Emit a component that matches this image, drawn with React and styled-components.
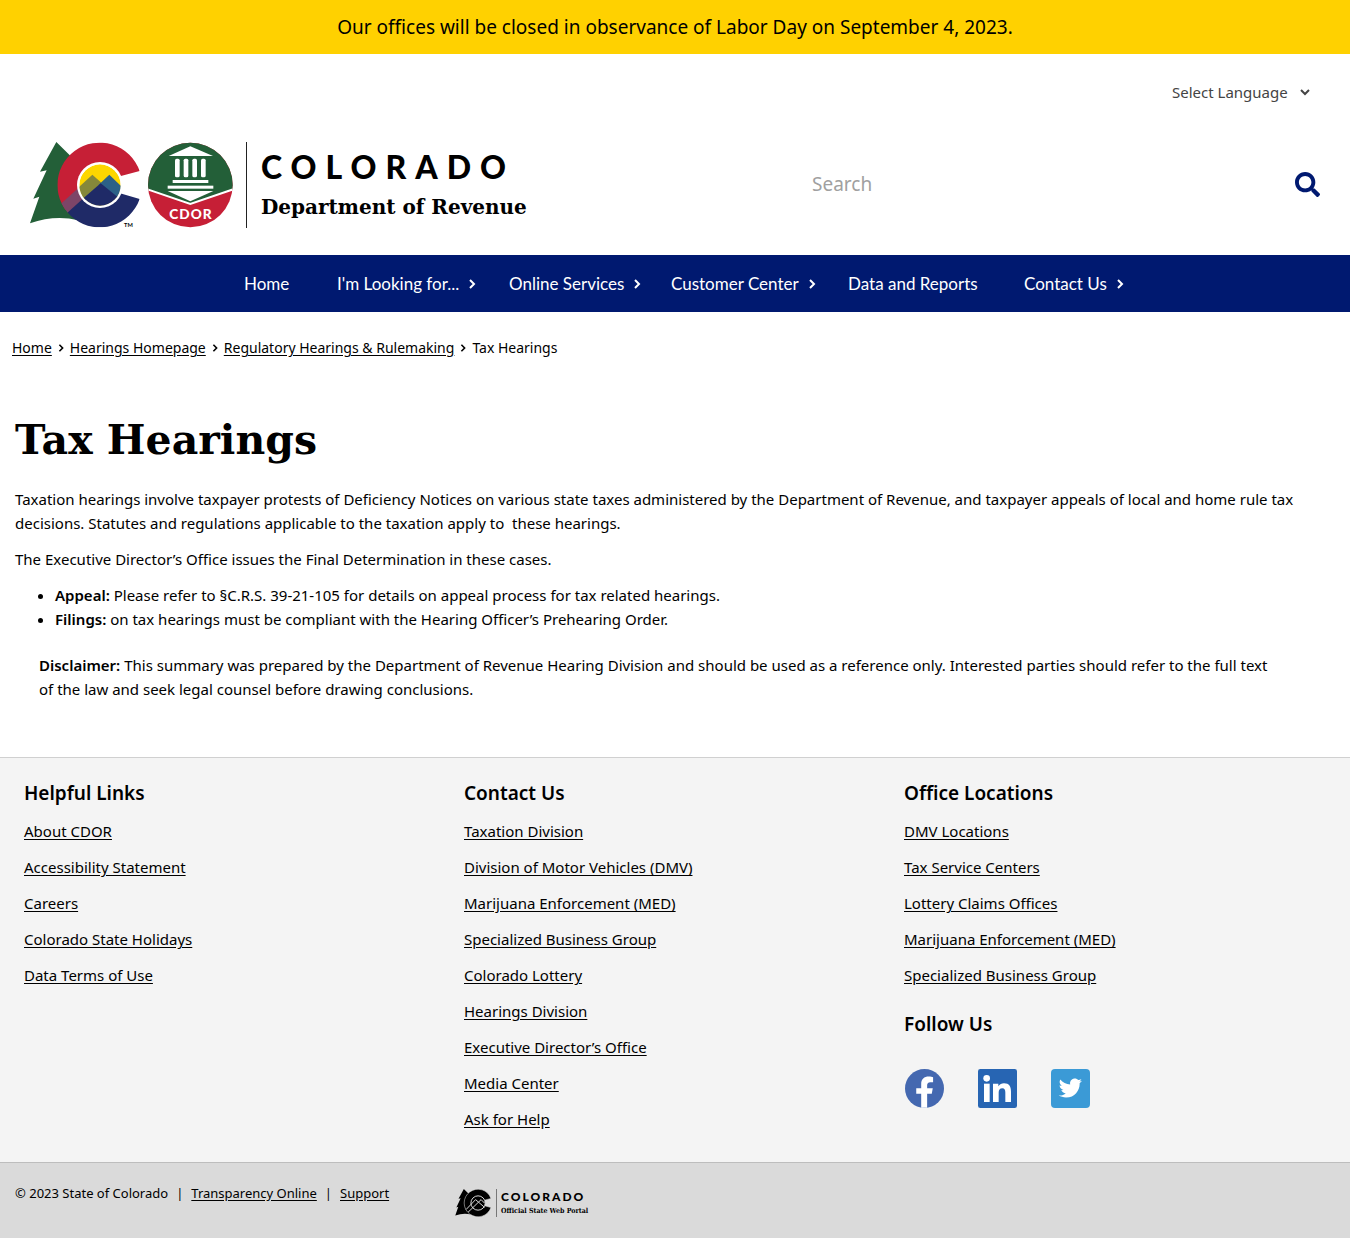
import React from "react";
import styled, { createGlobalStyle } from "styled-components";
import { FaSearch } from "react-icons/fa";

const sans = `"Noto Sans", "Open Sans", sans-serif`;
const navFont = `Lato, "Open Sans", sans-serif`;
const slab = `"DejaVu Serif", serif`;
const slabNarrow = `"DejaVu Serif Condensed", "DejaVu Serif", serif`;

const GlobalStyle = createGlobalStyle`
  *, *::before, *::after { box-sizing: border-box; }
  body {
    margin: 0;
    background: #fff;
    color: #000;
    font-family: ${sans};
    font-size: 15px;
    line-height: 24px;
  }
  a { color: inherit; }
`;

const Banner = styled.div`
  padding: 15px 16px;
  background: #ffd100;
  font-size: 19px;
  text-align: center;
`;

const Header = styled.header`
  padding: 26px 30px 27px;
`;

const LanguageRow = styled.div`
  display: flex;
  justify-content: flex-end;
  align-items: center;
  gap: 12px;
  padding-right: 10px;
  margin-bottom: 38px;
  color: #444;
`;

const LanguageSelect = styled.select`
  appearance: none;
  height: 24px;
  padding: 0;
  border: 0;
  background: transparent;
  color: inherit;
  font-family: ${sans};
  font-size: 15px;
`;

const HeaderMain = styled.div`
  display: flex;
  justify-content: space-between;
  align-items: center;
  gap: 24px;
`;

const Brand = styled.a`
  display: flex;
  align-items: center;
  color: #000;
  text-decoration: none;
`;

const Wordmark = styled.span`
  display: flex;
  flex-direction: column;
  justify-content: center;
  white-space: nowrap;
  height: ${(p) => (p.$small ? 28 : 86)}px;
  gap: ${(p) => (p.$small ? 3 : 8)}px;
  margin-left: ${(p) => (p.$small ? 4 : 12)}px;
  padding-left: ${(p) => (p.$small ? 4 : 14)}px;
  border-left: 1px solid ${(p) => (p.$small ? "#777" : "#222")};
`;

const StateName = styled.span`
  font-family: ${navFont};
  font-weight: 900;
  font-size: ${(p) => (p.$small ? 12 : 32)}px;
  line-height: ${(p) => (p.$small ? 12 : 36)}px;
  letter-spacing: ${(p) => (p.$small ? 2 : 9)}px;
`;

const Agency = styled.span`
  font-family: ${(p) => (p.$small ? slabNarrow : slab)};
  font-weight: 700;
  font-size: ${(p) => (p.$small ? 7 : 20)}px;
  line-height: ${(p) => (p.$small ? 9 : 28)}px;
`;

const SearchForm = styled.form`
  display: flex;
  align-items: center;
  flex: 0 1 508px;
`;

const SearchInput = styled.input`
  flex: 1;
  min-width: 0;
  height: 40px;
  padding: 0 0 2px;
  border: 0;
  outline: 0;
  background: transparent;
  font-family: ${sans};
  font-size: 19px;
  &::placeholder { color: #a0a0a0; opacity: 1; }
`;

const SearchButton = styled.button`
  display: flex;
  padding: 0 0 2px;
  border: 0;
  background: transparent;
  color: #001970;
  cursor: pointer;
`;

const Nav = styled.nav`
  background: #001970;
`;

const NavList = styled.ul`
  display: grid;
  grid-template-columns: 93fr 172fr 162fr 177fr 176fr 130fr;
  max-width: 910px;
  margin: 0 auto;
  padding: 0;
  list-style: none;
`;

const NavLink = styled.a`
  display: flex;
  align-items: center;
  gap: 8px;
  height: 57px;
  padding-left: 24px;
  color: #fff;
  font-family: ${navFont};
  font-size: 17px;
  text-decoration: none;
  white-space: nowrap;
`;

const Crumbs = styled.ol`
  display: flex;
  flex-wrap: wrap;
  margin: 0;
  padding: 24px 12px 0;
  font-size: 14px;
  list-style: none;
`;

const Crumb = styled.li`
  display: flex;
  align-items: center;
  gap: 5px;
  & + & { padding-left: 5px; }
`;

const Link = styled.a`
  text-decoration: underline;
  text-underline-offset: 2px;
`;

const Main = styled.main`
  padding: 52px 15px 56px;
`;

const Title = styled.h1`
  margin: 0 0 19px;
  font-family: ${slab};
  font-size: 41px;
  line-height: 56px;
  font-weight: 700;
`;

const Paragraph = styled.p`
  margin: 0 0 12px;
`;

const Points = styled.ul`
  margin: 0 0 22px;
  padding-left: 40px;
`;

const Disclaimer = styled.p`
  margin: 0 24px;
`;

const Strong = styled.strong`
  font-weight: 600;
`;

const FooterMain = styled.div`
  display: grid;
  grid-template-columns: repeat(3, 1fr);
  padding: 23px 6px 31px 24px;
  border-top: 1px solid #d0d0d0;
  background: #f4f4f4;
`;

const FooterHeading = styled.h2`
  margin: 0;
  font-size: 19px;
  line-height: 24px;
  font-weight: 600;
`;

const FooterLinks = styled.ul`
  display: flex;
  flex-direction: column;
  gap: 12px;
  margin: 0;
  padding: 14px 0 ${(p) => (p.$last ? 0 : 25)}px;
  list-style: none;
`;

const Social = styled.div`
  display: flex;
  gap: 34px;
  padding: 33px 0 0 1px;
`;

const SocialLink = styled.a`
  display: flex;
`;

const FooterBar = styled.div`
  display: grid;
  grid-template-columns: 1fr 2fr;
  align-items: start;
  padding: 18px 15px 21px;
  border-top: 1px solid #bdbdbd;
  background: #dadada;
`;

const Legal = styled.div`
  display: flex;
  gap: 8px;
  font-size: 13px;
`;

const PortalBrand = styled(Brand)`
  padding-top: 8px;
`;

function Chevron({ size = 10, width = 2, down }) {
  return (
    <svg width={size} height={size} viewBox="0 0 10 10" fill="none" stroke="currentColor" strokeWidth={width} aria-hidden="true">
      <path d={down ? "M1 3l4 4 4-4" : "M3 1l4 4-4 4"} />
    </svg>
  );
}

const letterC = "M359 123A127 127 0 1 0 359 207L300 190V139Z";
const tree = "M109 36L60 125L80 121L40 206L58 200L30 280Q105 254 175 271L240 165Z";

function ColoradoMark() {
  return (
    <svg width="204" height="86" viewBox="30 36 612 258" aria-hidden="true">
      <defs>
        <clipPath id="c-shape"><path d={letterC} /></clipPath>
        <clipPath id="sun"><circle cx="240" cy="165" r="62" /></clipPath>
        <clipPath id="seal"><circle cx="511" cy="165" r="127" /></clipPath>
      </defs>
      <path d={tree} fill="#235f38" />
      <g clipPath="url(#c-shape)">
        <path d="M100 30H380V165H100Z" fill="#c61f36" />
        <path d="M100 165H240V240H100Z" fill="#c61f36" />
        <path d="M122 222L185 165L220 195L142 250Z" fill="#7d4568" />
        <path d="M138 252L240 160L370 165V300H180Z" fill="#1f2a67" />
      </g>
      <circle cx="240" cy="165" r="69" fill="#fff" />
      <g clipPath="url(#sun)">
        <circle cx="240" cy="165" r="62" fill="#fdd600" />
        <path d="M165 182L217 134L246 160L180 225Z" fill="#85883a" />
        <path d="M236 164L268 134L310 175V215Z" fill="#2c6187" />
        <path d="M172 220L242 160L310 215V240H172Z" fill="#1f2a67" />
      </g>
      <text x="312" y="290" fontFamily="Lato, sans-serif" fontWeight="700" fontSize="17">TM</text>
      <g clipPath="url(#seal)">
        <path d="M380 30H640V300H380Z" fill="#c61f36" />
        <path d="M380 30H642V177L511 222L380 177Z" fill="#235f38" />
        <path d="M380 177L511 222L642 177" fill="none" stroke="#fff" strokeWidth="6" />
      </g>
      <g fill="#fff">
        <path d="M446 78L511 49L579 78Z" />
        <rect x="465" y="86" width="14" height="56" rx="5" />
        <rect x="491" y="86" width="14" height="56" rx="5" />
        <rect x="517" y="86" width="14" height="56" rx="5" />
        <rect x="543" y="86" width="14" height="56" rx="5" />
        <rect x="458" y="150" width="107" height="9" />
        <rect x="443" y="167" width="137" height="9" />
        <path d="M443 183H580L511 214Z" />
        <text x="513" y="266" textAnchor="middle" fontFamily="Lato, sans-serif" fontWeight="900" fontSize="41" letterSpacing="3">CDOR</text>
      </g>
    </svg>
  );
}

function PortalMark() {
  return (
    <svg width="37" height="28" viewBox="30 36 336 258" aria-hidden="true">
      <path d={tree} />
      <path d={letterC} stroke="#dadada" strokeWidth="5" />
      <circle cx="240" cy="165" r="66" stroke="#dadada" strokeWidth="9" />
      <path d="M130 225L217 134L300 205M148 250L268 134L300 166" fill="none" stroke="#dadada" strokeWidth="9" />
    </svg>
  );
}

function FacebookIcon() {
  return (
    <svg width="39" height="39" viewBox="0 0 118 118" aria-hidden="true">
      <circle cx="59" cy="59" r="59" fill="#4468b0" />
      <path d="M49 117V75H34V58H49V46C49 31 58 23 72 23C78 23 82 24 85 25V40H77C69 40 67 44 67 50V58H84L81 75H67V117Z" fill="#fff" />
    </svg>
  );
}

function LinkedInIcon() {
  return (
    <svg width="39" height="39" viewBox="0 0 117 117" aria-hidden="true">
      <rect width="117" height="117" rx="7" fill="#2765b3" />
      <g fill="#fff">
        <circle cx="26" cy="28" r="10" />
        <rect x="18" y="44" width="17" height="55" />
        <path d="M45 44H61V52C65 46 71 43 78 43C94 43 99 53 99 68V99H82V71C82 63 80 58 73 58C65 58 62 63 62 71V99H45Z" />
      </g>
    </svg>
  );
}

function TwitterIcon() {
  return (
    <svg width="39" height="39" viewBox="0 0 117 117" aria-hidden="true">
      <rect width="117" height="117" rx="12" fill="#3b9ad6" />
      <path
        transform="translate(23 22) scale(0.137)"
        fill="#fff"
        d="M459.37 151.716c.325 4.548.325 9.097.325 13.645 0 138.72-105.583 298.558-298.558 298.558-59.452 0-114.68-17.219-161.137-47.106 8.447.974 16.568 1.299 25.34 1.299 49.055 0 94.213-16.568 130.274-44.832-46.132-.975-84.792-31.188-98.112-72.772 6.498.974 12.995 1.624 19.818 1.624 9.421 0 18.843-1.3 27.614-3.573-48.081-9.747-84.143-51.98-84.143-102.985v-1.299c13.969 7.797 30.214 12.67 47.431 13.319-28.264-18.843-46.781-51.005-46.781-87.391 0-19.492 5.197-37.36 14.294-52.954 51.655 63.675 129.3 105.258 216.365 109.807-1.624-7.797-2.599-15.918-2.599-24.04 0-57.828 46.782-104.934 104.934-104.934 30.213 0 57.502 12.67 76.67 33.137 23.715-4.548 46.456-13.32 66.599-25.34-7.798 24.366-24.366 44.833-46.132 57.827 21.117-2.273 41.584-8.122 60.426-16.243-14.292 20.791-32.161 39.308-52.628 54.253z"
      />
    </svg>
  );
}

const navItems = [
  { label: "Home" },
  { label: "I'm Looking for...", menu: true },
  { label: "Online Services", menu: true },
  { label: "Customer Center", menu: true },
  { label: "Data and Reports" },
  { label: "Contact Us", menu: true },
];

const crumbs = ["Home", "Hearings Homepage", "Regulatory Hearings & Rulemaking"];

const intro =
  "Taxation hearings involve taxpayer protests of Deficiency Notices on various state taxes administered by the Department of Revenue, and taxpayer appeals of local and home rule tax decisions. Statutes and regulations applicable to the taxation apply to\u00a0 these hearings.";

const helpful = ["About CDOR", "Accessibility Statement", "Careers", "Colorado State Holidays", "Data Terms of Use"];

const contact = [
  "Taxation Division",
  "Division of Motor Vehicles (DMV)",
  "Marijuana Enforcement (MED)",
  "Specialized Business Group",
  "Colorado Lottery",
  "Hearings Division",
  "Executive Director’s Office",
  "Media Center",
  "Ask for Help",
];

const offices = [
  "DMV Locations",
  "Tax Service Centers",
  "Lottery Claims Offices",
  "Marijuana Enforcement (MED)",
  "Specialized Business Group",
];

function LinkGroup({ title, links, last }) {
  return (
    <>
      <FooterHeading>{title}</FooterHeading>
      <FooterLinks $last={last}>
        {links.map((text) => (
          <li key={text}><Link href="#">{text}</Link></li>
        ))}
      </FooterLinks>
    </>
  );
}

export default function App() {
  return (
    <>
      <GlobalStyle />
      <Banner>Our offices will be closed in observance of Labor Day on September 4, 2023.</Banner>
      <Header>
        <LanguageRow>
          <LanguageSelect aria-label="Select Language">
            <option>Select Language</option>
          </LanguageSelect>
          <Chevron down />
        </LanguageRow>
        <HeaderMain>
          <Brand href="#">
            <ColoradoMark />
            <Wordmark>
              <StateName>COLORADO</StateName>
              <Agency>Department of Revenue</Agency>
            </Wordmark>
          </Brand>
          <SearchForm role="search">
            <SearchInput type="text" placeholder="Search" aria-label="Search" />
            <SearchButton type="button" aria-label="Submit search">
              <FaSearch size={25} />
            </SearchButton>
          </SearchForm>
        </HeaderMain>
      </Header>
      <Nav>
        <NavList>
          {navItems.map(({ label, menu }) => (
            <li key={label}>
              <NavLink href="#">
                {label}
                {menu && <Chevron />}
              </NavLink>
            </li>
          ))}
        </NavList>
      </Nav>
      <Crumbs>
        {crumbs.map((text) => (
          <Crumb key={text}>
            <Link href="#">{text}</Link>
            <Chevron size={8} />
          </Crumb>
        ))}
        <Crumb>Tax Hearings</Crumb>
      </Crumbs>
      <Main>
        <Title>Tax Hearings</Title>
        <Paragraph>{intro}</Paragraph>
        <Paragraph>The Executive Director’s Office issues the Final Determination in these cases.</Paragraph>
        <Points>
          <li><Strong>Appeal:</Strong> Please refer to §C.R.S. 39-21-105 for details on appeal process for tax related hearings.</li>
          <li><Strong>Filings:</Strong> on tax hearings must be compliant with the Hearing Officer’s Prehearing Order.</li>
        </Points>
        <Disclaimer>
          <Strong>Disclaimer:</Strong> This summary was prepared by the Department of Revenue Hearing Division and should
          be used as a reference only. Interested parties should refer to the full text
          <br />
          of the law and seek legal counsel before drawing conclusions.
        </Disclaimer>
      </Main>
      <footer>
        <FooterMain>
          <div><LinkGroup title="Helpful Links" links={helpful} last /></div>
          <div><LinkGroup title="Contact Us" links={contact} last /></div>
          <div>
            <LinkGroup title="Office Locations" links={offices} />
            <FooterHeading>Follow Us</FooterHeading>
            <Social>
              <SocialLink href="#" aria-label="Facebook"><FacebookIcon /></SocialLink>
              <SocialLink href="#" aria-label="LinkedIn"><LinkedInIcon /></SocialLink>
              <SocialLink href="#" aria-label="Twitter"><TwitterIcon /></SocialLink>
            </Social>
          </div>
        </FooterMain>
        <FooterBar>
          <Legal>
            <span>© 2023 State of Colorado</span>
            <span>|</span>
            <Link href="#">Transparency Online</Link>
            <span>|</span>
            <Link href="#">Support</Link>
          </Legal>
          <PortalBrand href="#">
            <PortalMark />
            <Wordmark $small>
              <StateName $small>COLORADO</StateName>
              <Agency $small>Official State Web Portal</Agency>
            </Wordmark>
          </PortalBrand>
        </FooterBar>
      </footer>
    </>
  );
}
